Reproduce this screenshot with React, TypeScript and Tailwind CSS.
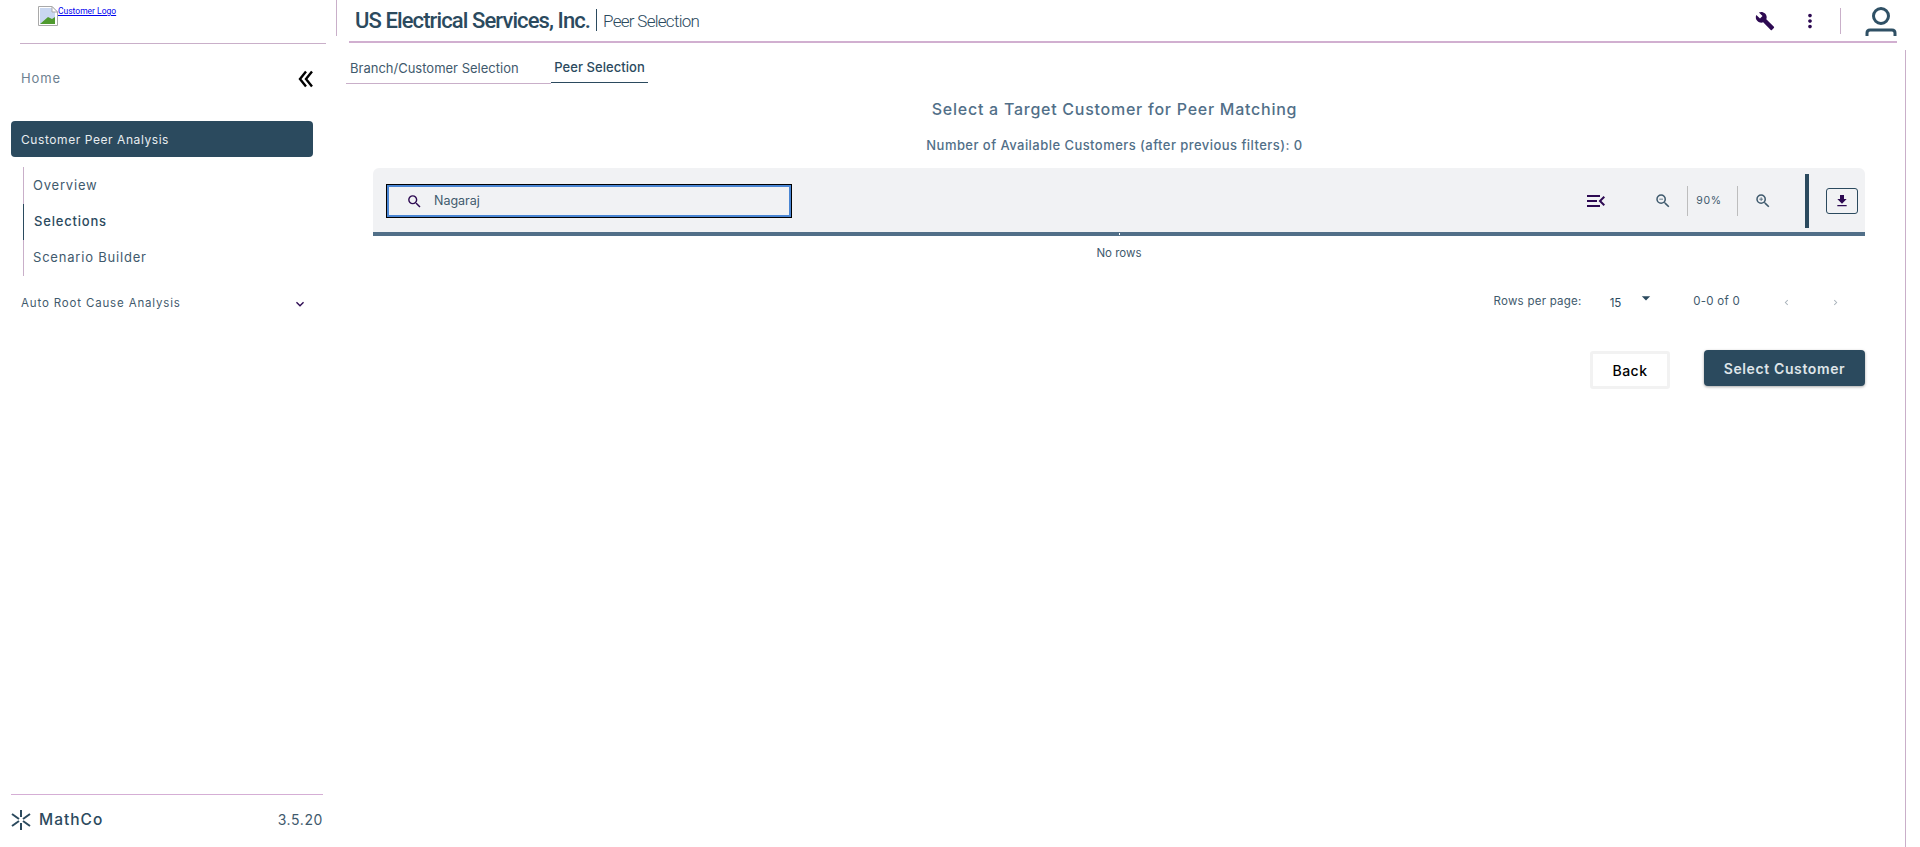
import React from "react";
import { MdBuild, MdMoreVert, MdSearch, MdMenuOpen, MdOutlineZoomOut, MdOutlineZoomIn, MdFileDownload, MdExpandMore, MdArrowDropDown, MdChevronLeft, MdChevronRight } from "react-icons/md";

const font = "font-['Inter','Liberation_Sans',sans-serif]";

function BrokenImage() {
  return (
    <svg width="20" height="20" viewBox="0 0 20 20" className="shrink-0">
      <path d="M0.5 0.5H14L19.5 6V19.5H0.5Z" fill="#fff" stroke="#a9a9a9" />
      <rect x="2" y="2" width="15" height="16" fill="#c9d7f0" />
      <path d="M2 18L10 11L14 13L17 11V18Z" fill="#4f9a2e" />
      <path d="M14 0.5V6H19.5Z" fill="#fff" stroke="#a9a9a9" />
    </svg>
  );
}

function MathCoMark() {
  return (
    <svg width="20" height="20" viewBox="0 0 20 20" fill="none" stroke="#2b4a5e" strokeWidth="2">
      <path d="M10 0V7M10 13V20M1 4L8 9M19 4L12 9M1 16L8 11M19 16L12 11" />
    </svg>
  );
}

function UserIcon() {
  return (
    <svg width="32" height="30" viewBox="0 0 32 30" fill="none" stroke="#2f5065" strokeWidth="3">
      <circle cx="16" cy="9" r="7.5" />
      <path d="M2 29V26Q2 23 5 23H27Q30 23 30 26V29" />
    </svg>
  );
}

function CollapseIcon() {
  return (
    <svg width="15" height="18" viewBox="0 0 15 18" fill="none" stroke="#000" strokeWidth="2.4">
      <path d="M8 1.5L2 9L8 16.5M14 1.5L8 9L14 16.5" />
    </svg>
  );
}

function Sidebar() {
  return (
    <aside className="w-[336px] h-full shrink-0 flex flex-col">
      <div className="h-[44px] ml-[20px] w-[306px] border-b border-[#c9afc9] pl-[18px] pt-[6px] flex items-start">
        <BrokenImage />
        <a className="text-[8.5px] leading-[10px] text-[#0000ee] underline font-['Roboto',sans-serif]">Customer Logo</a>
      </div>
      <div className="flex items-center justify-between h-[50px] mt-[10px] pl-[21px] pr-[23px]">
        <span className="text-[13px] tracking-[0.9px] text-[#6d8191]">Home</span>
        <CollapseIcon />
      </div>
      <div className="mt-[17px] mx-[11px] w-[302px] h-[36px] rounded-[4px] bg-[#2b4a5e] flex items-center pl-[10px] pt-[1px] text-[12px] tracking-[0.57px] text-[#e8edf0]">
        Customer Peer Analysis
      </div>
      <div className="ml-[23px] mt-[10px] border-l border-[#c9afc9] h-[109px] flex flex-col pt-[1px] text-[13px] tracking-[0.8px] text-[#3f5a6d]">
        <div className="h-[36px] flex items-center pl-[9px]">Overview</div>
        <div className="h-[36px] flex items-center pl-[10px] -ml-px border-l border-[#2b4a5e] font-medium text-[#2b4a5e]">Selections</div>
        <div className="h-[36px] flex items-center pl-[9px]">Scenario Builder</div>
      </div>
      <div className="mt-[10px] h-[36px] flex items-center justify-between pl-[21px] pr-[28px] text-[11.5px] tracking-[0.84px] text-[#3f5a6d]">
        <span>Auto Root Cause Analysis</span>
        <MdExpandMore className="text-[16px] text-[#2d0a52]" />
      </div>
      <div className="mt-auto mx-[11px] w-[312px] border-t border-[#d5aed5] h-[53px] flex items-center justify-between pb-[3px]">
        <div className="flex items-center gap-[8px]">
          <MathCoMark />
          <span className="text-[15.5px] font-medium tracking-[1px] text-[#2b4a5e]">MathCo</span>
        </div>
        <span className="text-[14px] tracking-[0.6px] text-[#3f5a6d]">3.5.20</span>
      </div>
    </aside>
  );
}

function Header() {
  return (
    <header className="h-[43px] ml-[12px] mr-[23px] border-b-2 border-[#d1afd0] flex items-center font-['Roboto',sans-serif]">
      <div className="flex items-center pl-[6px] text-[#2b4a5e] pb-[1px]">
        <span className="text-[22px] font-medium tracking-[-0.9px]">US Electrical Services, Inc.</span>
        <span className="ml-[6px] h-[22px] border-l border-[#2b4a5e]" />
        <span className="ml-[6px] text-[17px] font-light tracking-[-0.72px] mt-[4px]">Peer Selection</span>
      </div>
      <div className="ml-auto flex items-center">
        <MdBuild className="text-[20px] text-[#2d0a52]" />
        <MdMoreVert className="text-[22px] text-[#2d0a52] ml-[24px]" />
        <span className="h-[26px] border-l border-[#c9afc9] ml-[19px]" />
        <span className="ml-[24px] mt-[3px]"><UserIcon /></span>
      </div>
    </header>
  );
}

function Tabs() {
  return (
    <div className="flex items-start h-[34px] ml-[10px] text-[13px]">
      <div className="w-[205px] h-[34px] border-b border-[#c9afc9] pl-[4px] pt-[9px] text-[#3f5a6d]">Branch/Customer Selection</div>
      <div className="w-[97px] h-[33px] border-b border-[#2b4a5e] text-center pt-[8px] font-medium tracking-[0.05px] text-[#2b4a5e]">Peer Selection</div>
    </div>
  );
}

function Toolbar() {
  return (
    <div className="relative h-[68px] pt-[2px] rounded-t-[6px] bg-[#f1f2f4] border-b-4 border-[#516f88] flex items-center">
      <div className="ml-[13px] w-[406px] h-[34px] border border-black bg-[#f1f2f4]">
        <div className="w-full h-full border-[2px] border-[#4a86d4] flex items-center pl-[17px] text-[12.5px] text-[#3f5a6d]">
          <MdSearch className="text-[17px] text-[#2d0a52]" />
          <span className="ml-[11px] pt-[1px]">Nagaraj</span>
        </div>
      </div>
      <div className="ml-auto flex items-center">
        <MdMenuOpen className="text-[24px] text-[#2d0a52]" />
        <MdOutlineZoomOut className="ml-[46px] text-[18px] text-[#3f5a6d]" />
        <span className="ml-[15px] h-[30px] border-l border-[#bdbdbd]" />
        <span className="w-[49px] text-center text-[10.5px] tracking-[0.7px] text-[#3f5a6d] pr-[7px]">90%</span>
        <span className="h-[30px] border-l border-[#bdbdbd]" />
        <MdOutlineZoomIn className="ml-[16px] text-[18px] text-[#3f5a6d]" />
        <span className="ml-[33px] w-[4px] h-[54px] bg-[#2b4a5e]" />
        <button className="ml-[17px] mr-[7px] w-[32px] h-[26px] rounded-[3px] border border-[#2b4a5e] flex items-center justify-center">
          <MdFileDownload className="text-[16px] text-[#2d0a52]" />
        </button>
      </div>
      <span className="absolute left-[746px] bottom-[-3px] w-[1px] h-[2px] bg-white" />
    </div>
  );
}

function Pagination() {
  return (
    <div className="h-[40px] mt-[21px] flex items-center text-[#3f5a6d] text-[11.5px]">
      <span className="ml-auto tracking-[0.25px]">Rows per page:</span>
      <span className="ml-[28px] mt-[4px] text-[#2b4a5e]">15</span>
      <MdArrowDropDown className="ml-[15px] -mt-[8px] text-[20px] text-[#2b4a5e]" />
      <span className="ml-[37px] tracking-[0.25px]">0-0 of 0</span>
      <MdChevronLeft className="ml-[41px] text-[11px] text-[#a9b3bb]" />
      <MdChevronRight className="ml-[38px] mr-[24px] text-[11px] text-[#a9b3bb]" />
    </div>
  );
}

export default function App() {
  return (
    <div className={`flex w-full h-screen bg-white overflow-hidden ${font}`}>
      <Sidebar />
      <main className="relative flex-1 min-w-0 flex flex-col">
        <div className="flex">
          <span className="w-px h-[36px] bg-[#c9afc9] shrink-0" />
          <div className="flex-1 min-w-0"><Header /></div>
        </div>
        <div className="flex-1 min-h-0 mr-[14px] border-r border-[#c9afc9] mt-[7px] flex flex-col">
          <Tabs />
          <h1 className="mt-[15px] pr-[12px] text-center text-[16px] leading-[20px] font-medium tracking-[0.74px] text-[#516f88]">Select a Target Customer for Peer Matching</h1>
          <p className="mt-[17px] pr-[12px] text-center text-[13px] leading-[18px] font-medium tracking-[0.45px] text-[#516f88]">Number of Available Customers (after previous filters): 0</p>
          <section className="mt-[14px] ml-[37px] mr-[40px]">
            <Toolbar />
            <div className="text-center text-[11.5px] leading-[16px] mt-[9px] text-[#3f5a6d]">No rows</div>
            <Pagination />
            <div className="mt-[28px] flex justify-end items-start">
              <button className="w-[80px] h-[38px] mt-[1px] rounded-[3px] border-[3px] border-[#f2f2f2] bg-white text-[14px] font-medium tracking-[0.5px] text-black">Back</button>
              <button className="ml-[34px] w-[161px] h-[36px] rounded-[4px] bg-[#2b4a5e] shadow-[0_1px_3px_rgba(0,0,0,0.35)] text-[14px] font-semibold tracking-[0.62px] text-[#dfe5e9]">Select Customer</button>
            </div>
          </section>
        </div>
      </main>
    </div>
  );
}
